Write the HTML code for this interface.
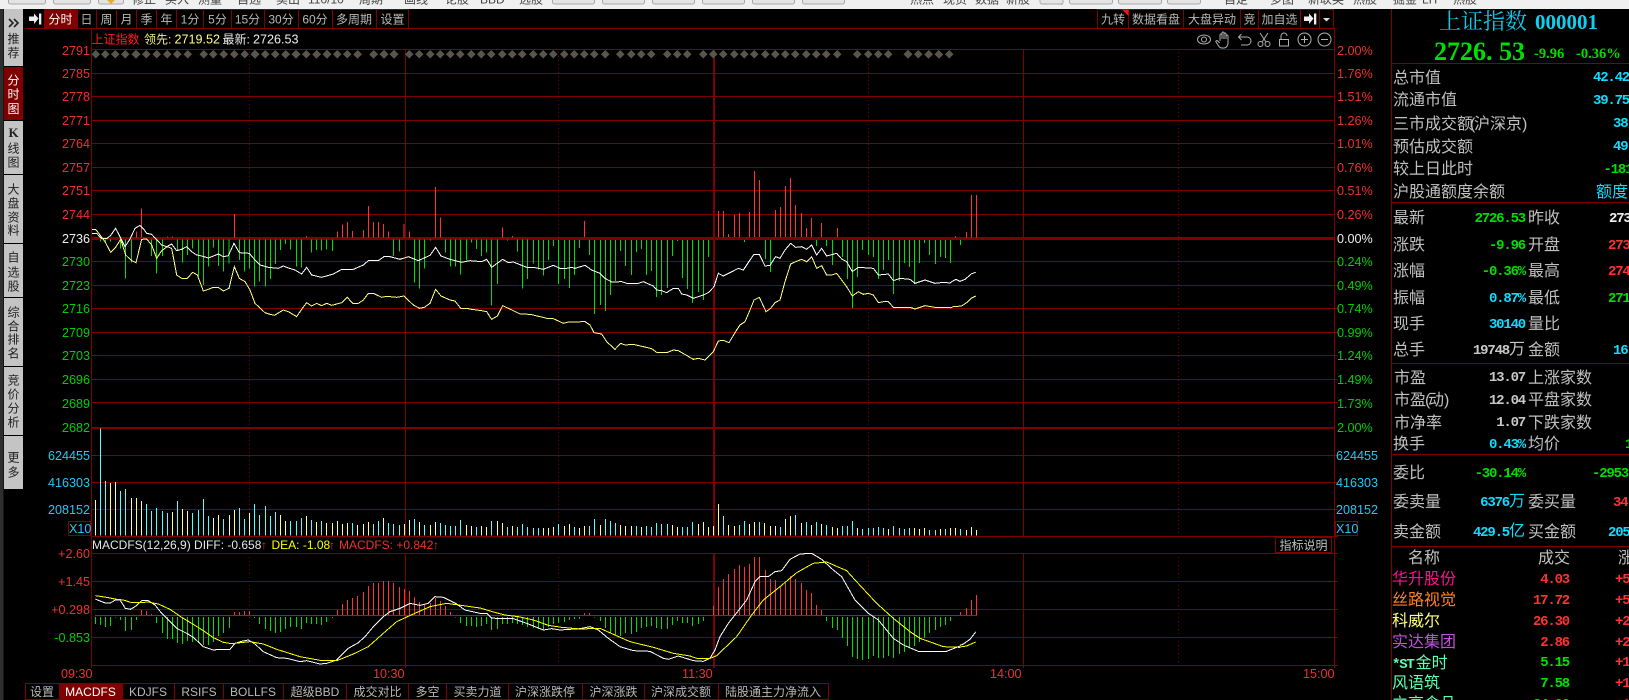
<!DOCTYPE html>
<html><head><meta charset="utf-8"><title>上证指数 分时图</title>
<style>
html,body{margin:0;padding:0;background:#000;width:1629px;height:700px;overflow:hidden}
svg{display:block;position:absolute;left:0;top:0}
text{font-family:"Liberation Sans","WenQuanYi Zen Hei","Noto Sans CJK SC",sans-serif;white-space:pre}
.a{font-size:12.6px}
.m{font-size:12px}
.r{fill:#f03030}.g{fill:#00d000}.c{fill:#22c8f5}.w{fill:#f0f0f0}.y{fill:#ffff60}.t{fill:#c0c0c0}
.ta{font-size:12px;fill:#b8b8b8;text-anchor:middle}
.sd{font-size:12px;fill:#222}
.l{font-size:16px;fill:#c0c0c0}
.n{font-family:"Liberation Mono",monospace;font-weight:bold;font-size:14px;letter-spacing:-1.2px}
.e{text-anchor:end}
.u{font-size:16px;font-family:"Liberation Sans","WenQuanYi Zen Hei","Noto Sans CJK SC",sans-serif;font-weight:normal;letter-spacing:0}
.top{font-size:12px;fill:#444}
</style></head><body>
<svg width="1629" height="700" viewBox="0 0 1629 700" xmlns="http://www.w3.org/2000/svg">
<rect width="1629" height="700" fill="#000"/>
<!-- top strip -->
<rect width="1629" height="9" fill="#f0f0f0"/>
<rect x="0" y="9" width="3.5" height="691" fill="#2e2e2e"/>
<g fill="#e4e4e4" stroke="#a8a8a8"><rect x="8.5" y="-6" width="37" height="10" rx="2"/><rect x="53.5" y="-6" width="37" height="10" rx="2"/><rect x="98.5" y="-6" width="25" height="10" rx="2"/></g>
<path d="M107 0h8l-4 4z" fill="#e8b020"/>
<g class="top">
<text class="top" x="132" y="3.5">修正</text><text class="top" x="165" y="3.5">买入</text><text class="top" x="198" y="3.5">测量</text><text class="top" x="237" y="3.5">自选</text><text class="top" x="276" y="3.5">卖出</text><text class="top" x="308" y="3.5">110/10</text><text class="top" x="359" y="3.5">周期</text><text class="top" x="404" y="3.5">画线</text><text class="top" x="445" y="3.5">论股</text><text class="top" x="480" y="3.5">BBD</text><text class="top" x="519" y="3.5">选股</text>
<text class="top" x="910" y="3.5">热点</text><text class="top" x="943" y="3.5">现货</text><text class="top" x="975" y="3.5">数据</text><text class="top" x="1006" y="3.5">新股</text><text class="top" x="1040" y="3.5">诊断</text><text class="top" x="1224" y="3.5">自定</text><text class="top" x="1270" y="3.5">多图</text><text class="top" x="1308" y="3.5">新联英</text><text class="top" x="1353" y="3.5">热股</text><text class="top" x="1393" y="3.5">掘金</text><text class="top" x="1422" y="3.5">LIT</text><text class="top" x="1453" y="3.5">热股</text>
</g>
<g fill="#e4e4e4" stroke="#a8a8a8"><rect x="552.5" y="-6" width="42" height="10" rx="2"/><rect x="602.5" y="-6" width="42" height="10" rx="2"/><rect x="652.5" y="-6" width="42" height="10" rx="2"/><rect x="702.5" y="-6" width="42" height="10" rx="2"/><rect x="752.5" y="-6" width="42" height="10" rx="2"/><rect x="802.5" y="-6" width="42" height="10" rx="2"/><rect x="1040" y="-6" width="23" height="10" rx="2"/><rect x="1069.5" y="-6" width="43" height="10" rx="2"/><rect x="1118.5" y="-6" width="43" height="10" rx="2"/><rect x="1167.5" y="-6" width="33" height="10" rx="2"/></g>

<!-- left sidebar -->
<g fill="#c4c4c4"><rect x="4" y="9" width="19" height="57"/><rect x="4" y="121" width="19" height="53"/><rect x="4" y="175" width="19" height="68"/><rect x="4" y="244" width="19" height="53"/><rect x="4" y="298" width="19" height="68"/><rect x="4" y="367" width="19" height="68"/><rect x="4" y="436" width="19" height="53"/></g>
<rect x="4" y="67" width="19" height="53" fill="#800000"/>
<path d="M9 19l4 4-4 4M14 19l4 4-4 4" fill="none" stroke="#222" stroke-width="1.6"/>
<text class="sd" x="7.5 7.5" y="42.8 56.8">推荐</text>
<text class="sd" style="fill:#fff" x="7.5 7.5 7.5" y="84.5 98.5 112.8">分时图</text>
<text style="font:bold 13px 'Liberation Serif',serif;fill:#222" x="8.5" y="137">K</text>
<text class="sd" x="7.5 7.5" y="152.5 166.5">线图</text>
<text class="sd" x="7.5 7.5 7.5 7.5" y="193.5 207.5 221.5 234.5">大盘资料</text>
<text class="sd" x="7.5 7.5 7.5" y="261.5 276.5 290.5">自选股</text>
<text class="sd" x="7.5 7.5 7.5 7.5" y="316.5 330.5 343.5 357.5">综合排名</text>
<text class="sd" x="7.5 7.5 7.5 7.5" y="384.5 398.5 412.5 426.5">竞价分析</text>
<text class="sd" x="7.5 7.5" y="461.5 476.5">更多</text>

<!-- grid -->
<path shape-rendering="crispEdges" stroke="#800000" fill="none" d="M25 28.5H1334M91 49.5H1334M91 73.5H1334M91 96.5H1334M91 120.5H1334M91 143.5H1334M91 167.5H1334M91 190.5H1334M91 214.5H1334M91 261.5H1338M91 285.5H1338M91 308.5H1338M91 332.5H1338M91 355.5H1338M91 379.5H1338M91 402.5H1338M91 455.5H1338M91 482.5H1338M91 509.5H1338M91 536.5H1338M91 553.5H1338M91 581.5H1338M91 609.5H1338M91 637.5H1338M91 665.5H1338M91.5 29V668M405.5 49V536M405.5 553V668M1023.5 49V536M1023.5 553V668M1334.5 28V668M1391.5 9V700M1391 63.5H1629M1391 202.5H1629M1391 363.5H1629M1391 454.5H1629M1391 546.5H1629"/>
<path shape-rendering="crispEdges" stroke="#800000" fill="none" stroke-dasharray="1 3" d="M249.5 52V536M249.5 553V665M558.5 52V536M558.5 553V665M868.5 52V536M868.5 553V665M1178.5 52V536M1178.5 553V665"/>
<g fill="#800000" shape-rendering="crispEdges"><rect x="91" y="237" width="1243" height="3"/><rect x="91" y="427" width="1243" height="2"/><rect x="713" y="49" width="2" height="487"/><rect x="713" y="553" width="2" height="115"/></g>
<path shape-rendering="crispEdges" stroke="#b81414" d="M95 615.5H977"/>

<!-- diamonds -->
<g fill="#555" shape-rendering="crispEdges" transform="scale(.33333)"><path d="M287 150l13 13-13 13-13-13zM316 150l13 13-13 13-13-13zM346 150l13 13-13 13-13-13zM376 150l13 13-13 13-13-13zM408 150l13 13-13 13-13-13zM439 150l13 13-13 13-13-13zM470 150l13 13-13 13-13-13zM502 150l13 13-13 13-13-13zM532 150l13 13-13 13-13-13zM563 150l13 13-13 13-13-13zM611 150l13 13-13 13-13-13zM640 150l13 13-13 13-13-13zM671 150l13 13-13 13-13-13zM703 150l13 13-13 13-13-13zM734 150l13 13-13 13-13-13zM765 150l13 13-13 13-13-13zM796 150l13 13-13 13-13-13zM826 150l13 13-13 13-13-13zM857 150l13 13-13 13-13-13zM888 150l13 13-13 13-13-13zM919 150l13 13-13 13-13-13zM950 150l13 13-13 13-13-13zM981 150l13 13-13 13-13-13zM1012 150l13 13-13 13-13-13zM1042 150l13 13-13 13-13-13zM1073 150l13 13-13 13-13-13zM1121 150l13 13-13 13-13-13zM1152 150l13 13-13 13-13-13zM1182 150l13 13-13 13-13-13z"/></g>
<g fill="#555" shape-rendering="crispEdges" transform="translate(400,46) scale(.33333)"><path d="M28 12l13 13-13 13-13-13zM58 12l13 13-13 13-13-13zM91 12l13 13-13 13-13-13zM121 12l13 13-13 13-13-13zM151 12l13 13-13 13-13-13zM181 12l13 13-13 13-13-13zM214 12l13 13-13 13-13-13zM244 12l13 13-13 13-13-13zM274 12l13 13-13 13-13-13zM307 12l13 13-13 13-13-13zM337 12l13 13-13 13-13-13zM367 12l13 13-13 13-13-13zM400 12l13 13-13 13-13-13zM430 12l13 13-13 13-13-13zM460 12l13 13-13 13-13-13zM493 12l13 13-13 13-13-13zM523 12l13 13-13 13-13-13zM553 12l13 13-13 13-13-13zM583 12l13 13-13 13-13-13zM616 12l13 13-13 13-13-13zM661 12l13 13-13 13-13-13zM694 12l13 13-13 13-13-13zM724 12l13 13-13 13-13-13zM754 12l13 13-13 13-13-13zM802 12l13 13-13 13-13-13zM832 12l13 13-13 13-13-13zM862 12l13 13-13 13-13-13zM910 12l13 13-13 13-13-13zM940 12l13 13-13 13-13-13zM970 12l13 13-13 13-13-13zM1003 12l13 13-13 13-13-13zM1033 12l13 13-13 13-13-13zM1063 12l13 13-13 13-13-13zM1096 12l13 13-13 13-13-13zM1126 12l13 13-13 13-13-13zM1156 12l13 13-13 13-13-13zM1186 12l13 13-13 13-13-13zM1219 12l13 13-13 13-13-13zM1249 12l13 13-13 13-13-13zM1279 12l13 13-13 13-13-13zM1312 12l13 13-13 13-13-13zM1372 12l13 13-13 13-13-13zM1405 12l13 13-13 13-13-13zM1435 12l13 13-13 13-13-13zM1465 12l13 13-13 13-13-13zM1524 12l13 13-13 13-13-13zM1555 12l13 13-13 13-13-13zM1586 12l13 13-13 13-13-13zM1617 12l13 13-13 13-13-13zM1648 12l13 13-13 13-13-13z"/></g>

<!-- main bars part 1 -->
<g transform="translate(80,190) scale(.33333)" fill="none" stroke-width="3" shape-rendering="crispEdges">
<path stroke="#ff3232" d="M170 143V125M185 143V55M262 143V140M277 143V140M463 143V72M680 143V138M772 143V125M787 143V103M802 143V96M817 143V123M850 143V120M865 143V48M880 143V96M895 143V96M910 143V102M925 143V125M972 143V102M988 143V125M1067 143V-9M1082 143V82M1267 143V113M1298 143V138"/>
<path stroke="#00e000" d="M62 149V155M77 149V155M92 149V155M122 149V175M137 149V265M155 149V218M215 149V198M230 149V250M247 149V198M292 149V182M307 149V218M322 149V195M337 149V175M355 149V260M370 149V285M385 149V230M400 149V172M415 149V228M430 149V245M447 149V220M478 149V210M493 149V245M508 149V235M523 149V290M538 149V275M556 149V290M571 149V267M586 149V222M601 149V180M616 149V162M631 149V178M649 149V230M664 149V232M694 149V188M709 149V180M724 149V182M739 149V178M757 149V183M940 149V198M958 149V185M1003 149V278M1018 149V296M1033 149V235M1052 149V151M1096 149V188M1111 149V230M1126 149V230M1141 149V254M1159 149V212M1174 149V158M1189 149V177M1204 149V198M1219 149V188M1235 149V347M1252 149V282M1282 149V151M1312 149V184M1328 149V296M1343 149V267"/>
</g>
<!-- main bars part 2 -->
<g transform="translate(530,160) scale(.33333)" fill="none" stroke-width="3" shape-rendering="crispEdges">
<path stroke="#ff3232" d="M163 231V183M566 231V153M581 231V153M596 231V222M613 231V165M628 231V159M658 231V156M673 231V33M688 231V60M736 231V150M751 231V141M766 231V78M781 231V54M796 231V135M814 231V159M829 231V204M844 231V174M874 231V189M922 231V204"/>
<path stroke="#00e000" d="M10 240V310M25 240V328M40 240V347M55 240V300M70 240V258M85 240V372M103 240V357M118 240V384M133 240V345M148 240V264M178 240V285M193 240V462M211 240V435M226 240V453M241 240V405M256 240V363M271 240V273M286 240V318M304 240V345M319 240V276M334 240V267M349 240V345M364 240V333M379 240V411M394 240V405M412 240V384M427 240V288M442 240V243M457 240V354M472 240V387M487 240V429M505 240V396M520 240V420M535 240V291M643 240V246M706 240V297M721 240V336M859 240V258M889 240V258M907 240V315M937 240V291M952 240V357M967 240V444M982 240V351M997 240V270M1015 240V285M1030 240V291M1045 240V357M1060 240V330M1075 240V300M1090 240V402M1108 240V363M1123 240V309M1138 240V321M1153 240V372M1168 240V309M1183 240V249M1198 240V285M1216 240V312M1231 240V291M1246 240V294"/>
</g>
<g transform="translate(930,180) scale(.33333)" fill="none" stroke-width="3" shape-rendering="crispEdges">
<path stroke="#ff3232" d="M76 172V168M109 172V156M124 172V45M139 172V45"/>
<path stroke="#00e000" d="M61 180V249M91 180V195"/>
</g>
<!-- main lines -->
<g fill="none" stroke-width="3" shape-rendering="crispEdges">
<g transform="translate(80,190) scale(.33333)">
<polyline stroke="#ffffff" points="36,130 50,130 65,146 80,146 92,136 107,115 120,140 135,170 150,147 165,115 180,106 192,118 200,130 215,133 228,147 245,165 260,170 275,162 290,182 305,178 320,170 335,185 350,195 365,198 385,204 400,198 415,192 430,200 445,197 462,160 478,188 508,190 525,210 540,225 565,232 595,235 610,228 625,234 645,240 665,252 680,232 695,255 725,262 760,252 785,238 820,238 850,225 865,212 895,212 912,200 930,200 960,208 985,200 1015,212 1050,196 1067,172 1083,198 1110,208 1145,217 1170,212 1205,215 1220,208 1235,232 1268,208 1285,218 1300,216 1320,224 1340,232 1350,232"/>
<polyline stroke="#ffff80" points="36,118 47,118 60,135 75,155 92,187 107,172 122,148 137,195 155,212 168,218 185,148 200,147 215,165 230,205 245,182 262,170 275,175 290,255 305,265 322,265 338,247 352,255 370,303 385,298 400,292 415,292 430,303 447,295 463,230 478,265 495,275 510,300 525,340 555,368 570,373 583,376 610,360 625,365 650,380 665,358 680,338 695,348 710,340 725,347 740,340 755,346 785,338 802,322 818,340 835,340 850,330 865,310 880,310 905,322 920,319 950,322 972,318 1000,345 1018,355 1033,352 1050,340 1067,298 1083,318 1110,330 1125,333 1142,355 1160,355 1175,358 1205,362 1220,365 1235,388 1252,378 1268,347 1285,355 1300,362 1320,372 1350,373"/>
</g>
<g transform="translate(530,160) scale(.33333)">
<polyline stroke="#ffffff" points="0,322 15,323 40,328 70,316 90,325 110,325 125,322 135,325 165,316 185,330 210,340 225,355 245,366 275,365 290,370 325,370 340,365 370,378 380,390 395,392 410,398 430,385 445,385 455,402 470,405 490,415 520,405 535,398 552,380 565,340 580,348 600,338 625,325 640,330 660,300 672,283 688,283 705,318 720,316 737,290 750,295 765,270 782,250 797,262 815,260 830,268 845,255 860,285 875,265 890,288 920,280 935,297 950,305 967,335 985,322 1030,325 1045,345 1075,342 1090,362 1110,355 1140,358 1155,370 1185,360 1215,370 1240,367 1260,369"/>
<polyline stroke="#ffff80" points="0,463 30,470 50,475 70,476 100,490 115,486 165,485 180,495 192,518 215,522 230,545 255,568 272,550 285,555 310,553 340,560 365,566 380,577 410,578 430,570 445,572 490,598 505,595 525,600 550,575 565,543 580,541 597,548 620,510 630,495 645,485 660,450 672,420 688,412 708,455 722,445 735,428 750,420 765,365 782,312 797,305 815,298 830,305 845,290 860,325 875,317 890,345 905,345 920,340 950,380 967,408 985,395 1000,403 1015,400 1030,405 1045,428 1060,425 1075,425 1090,442 1140,442 1155,447 1185,437 1215,442 1260,442"/>
</g>
<g transform="translate(930,180) scale(.33333)">
<polyline stroke="#ffffff" points="60,309 70,302 78,298 90,304 105,298 125,281 137,277"/>
<polyline stroke="#ffff80" points="60,384 70,380 95,378 110,368 125,354 137,348"/>
</g>
</g>

<!-- volume -->
<g transform="translate(0,400) scale(.33333)" fill="none" stroke-width="3" shape-rendering="crispEdges">
<path stroke="#ffff90" d="M286 407V300M331 407V249M346 407V246M394 407V294M409 407V294M424 407V303M517 407V336M547 407V327M562 407V333M640 407V354M655 407V345M688 407V345M703 407V330M748 407V339M841 407V345M856 407V363M919 407V348M949 407V366M979 407V369M997 407V369M1012 407V363M1027 407V372M1042 407V369M1072 407V375M1090 407V372M1105 407V366M1150 407V354M1213 407V372M1228 407V360M1258 407V366M1291 407V375M1306 407V366M1399 407V375M1414 407V378"/>
<path stroke="#55ffff" d="M301 407V85M316 407V243M361 407V273M376 407V267M439 407V312M454 407V333M469 407V324M487 407V333M502 407V339M532 407V303M577 407V339M595 407V330M610 407V297M625 407V348M670 407V357M718 407V324M733 407V357M763 407V312M778 407V345M796 407V318M811 407V348M826 407V336M871 407V363M889 407V363M904 407V354M934 407V360M964 407V363M1057 407V369M1120 407V372M1135 407V363M1165 407V369M1180 407V372M1198 407V375M1243 407V357M1273 407V375M1321 407V369M1336 407V375M1351 407V378M1366 407V378M1381 407V360M1429 407V381"/>
</g>
<g transform="translate(480,400) scale(.33333)" fill="none" stroke-width="3" shape-rendering="crispEdges">
<path stroke="#ffff90" d="M4 407V378M19 407V381M52 407V363M67 407V369M97 407V378M190 407V384M205 407V384M220 407V381M253 407V378M268 407V372M298 407V384M313 407V378M361 407V375M421 407V375M436 407V378M454 407V378M484 407V381M577 407V375M592 407V381M655 407V372M670 407V366M685 407V381M700 407V378M715 407V312M745 407V375M763 407V378M808 407V372M823 407V366M853 407V369M871 407V378M886 407V378M916 407V357M931 407V348M964 407V369M994 407V375M1024 407V372M1057 407V381M1072 407V384M1132 407V384M1225 407V387M1303 407V384M1318 407V387M1333 407V384M1381 407V387M1411 407V384M1426 407V384"/>
<path stroke="#55ffff" d="M34 407V363M82 407V381M112 407V381M127 407V372M142 407V381M160 407V384M175 407V384M235 407V372M283 407V381M328 407V378M343 407V357M376 407V357M391 407V363M406 407V369M469 407V378M499 407V378M514 407V381M529 407V369M544 407V372M562 407V372M607 407V381M622 407V381M637 407V366M730 407V348M778 407V375M793 407V363M838 407V366M901 407V381M946 407V345M979 407V366M1009 407V366M1039 407V375M1087 407V378M1102 407V378M1117 407V363M1147 407V387M1165 407V384M1180 407V384M1195 407V381M1210 407V384M1240 407V378M1258 407V384M1273 407V387M1288 407V384M1348 407V390M1366 407V390M1396 407V387"/>
</g>
<g transform="translate(930,180) scale(.33333)" fill="none" stroke-width="3" shape-rendering="crispEdges">
<path stroke="#55ffff" d="M91 1067V1047"/>
<path stroke="#ffff90" d="M109 1067V1050M124 1067V1041M139 1067V1050"/>
</g>

<!-- MACD histogram -->
<g transform="translate(0,400) scale(.33333)" fill="none" stroke-width="3" shape-rendering="crispEdges">
<path stroke="#ff3232" d="M424 645V630M439 645V633M454 645V642M703 645V636M718 645V636M733 645V633M748 645V633M1012 645V630M1027 645V612M1042 645V600M1057 645V594M1072 645V588M1090 645V576M1105 645V558M1120 645V549M1135 645V549M1150 645V543M1165 645V543M1180 645V549M1198 645V561M1213 645V567M1228 645V573M1243 645V591M1258 645V606M1273 645V612M1291 645V609M1306 645V594M1321 645V603M1336 645V618M1351 645V636"/>
<path stroke="#00e000" d="M286 651V672M301 651V675M316 651V681M331 651V678M346 651V653M361 651V660M376 651V693M394 651V690M409 651V660M469 651V669M487 651V699M502 651V717M517 651V717M532 651V729M547 651V732M562 651V723M577 651V726M595 651V729M610 651V735M625 651V735M640 651V726M655 651V708M670 651V699M688 651V684M763 651V654M778 651V672M796 651V687M811 651V693M826 651V699M841 651V696M856 651V687M871 651V681M889 651V681M904 651V687M919 651V669M934 651V672M949 651V672M964 651V675M979 651V666M997 651V654M1366 651V653M1381 651V669M1399 651V678M1414 651V678M1429 651V681"/>
</g>
<g transform="translate(480,400) scale(.33333)" fill="none" stroke-width="3" shape-rendering="crispEdges">
<path stroke="#ff3232" d="M313 645V639M328 645V639M700 645V618M715 645V561M730 645V537M745 645V522M763 645V507M778 645V495M793 645V501M808 645V492M823 645V471M838 645V471M856 645V510M871 645V537M886 645V540M901 645V558M916 645V549M931 645V528M946 645V537M964 645V549M979 645V570M994 645V579M1009 645V615M1024 645V630"/>
<path stroke="#00e000" d="M4 651V678M19 651V672M34 651V690M52 651V687M67 651V672M82 651V672M97 651V669M112 651V672M127 651V675M142 651V681M160 651V684M175 651V687M190 651V690M205 651V681M220 651V672M235 651V669M253 651V666M268 651V660M283 651V657M298 651V657M343 651V652M361 651V663M376 651V684M391 651V699M406 651V705M421 651V708M436 651V699M454 651V702M469 651V696M484 651V684M499 651V681M514 651V678M529 651V684M544 651V687M562 651V687M577 651V675M592 651V663M607 651V669M622 651V669M637 651V678M655 651V672M670 651V663M1039 651V663M1057 651V684M1072 651V690M1087 651V714M1102 651V738M1117 651V771M1132 651V777M1147 651V780M1165 651V777M1180 651V768M1195 651V774M1210 651V774M1225 651V768M1240 651V774M1258 651V762M1273 651V756M1288 651V741M1303 651V738M1318 651V726M1333 651V714M1348 651V699M1366 651V690M1381 651V681M1396 651V675M1411 651V663"/>
</g>
<g transform="translate(930,180) scale(.33333)" fill="none" stroke-width="3" shape-rendering="crispEdges">
<path stroke="#ff3232" d="M91 1305V1296M109 1305V1284M124 1305V1260M139 1305V1245"/>
</g>
<!-- MACD lines -->
<g fill="none" stroke-width="3" shape-rendering="crispEdges">
<g transform="translate(0,400) scale(.33333)">
<polyline stroke="#ffffff" points="286,597 300,603 316,609 331,609 346,600 360,600 376,625 392,628 408,618 425,602 445,602 465,615 485,640 505,660 530,685 560,700 580,712 610,740 640,750 660,748 690,748 705,730 725,724 745,720 765,732 790,755 830,773 860,775 900,785 920,782 960,792 980,790 1010,780 1045,745 1075,728 1095,710 1120,680 1150,650 1170,635 1200,625 1230,610 1260,616 1285,610 1305,590 1330,592 1370,612 1395,630 1440,640"/>
<polyline stroke="#ffff00" points="286,587 320,592 350,598 370,600 395,608 420,608 445,606 475,612 510,628 545,652 575,670 610,692 640,713 670,727 695,731 750,725 790,732 830,748 900,770 960,781 1010,782 1060,762 1105,740 1150,700 1190,665 1240,642 1290,620 1340,610 1440,624"/>
</g>
<g transform="translate(480,400) scale(.33333)">
<polyline stroke="#ffffff" points="0,640 20,640 35,654 60,656 100,656 140,670 190,690 215,686 240,690 270,688 300,686 330,680 355,690 385,715 420,740 460,752 510,754 550,775 565,778 595,768 640,782 670,784 690,775 705,750 720,710 745,670 765,645 800,600 825,545 840,530 865,530 885,515 905,512 930,478 960,462 995,460 1025,478 1060,510 1085,530 1125,600 1165,640 1195,660 1240,715 1270,735 1315,754 1400,754 1440,738"/>
<polyline stroke="#ffff00" points="0,624 40,636 75,645 115,650 160,660 205,676 245,682 300,687 360,685 400,703 450,725 520,742 580,760 630,768 650,775 690,775 710,767 770,710 815,645 850,600 900,560 950,518 1000,490 1040,486 1100,512 1125,540 1190,610 1240,655 1290,695 1320,715 1390,740 1440,742"/>
</g>
<g transform="translate(930,180) scale(.33333)">
<polyline stroke="#ffffff" points="90,1396 100,1392 120,1378 137,1356"/>
<polyline stroke="#ffff00" points="90,1401 110,1398 137,1386"/>
</g>
</g>

<!-- toolbar -->
<rect x="44" y="9" width="33" height="19" fill="#800000"/>
<path shape-rendering="crispEdges" stroke="#800000" fill="none" d="M44 9.5H408M77.5 9V28M96.5 9V28M116.5 9V28M136.5 9V28M156.5 9V28M176.5 9V28M203.5 9V28M231.5 9V28M264.5 9V28M298.5 9V28M332.5 9V28M376.5 9V28M408.5 9V28M1097 9.5H1334M1097.5 9V28M1128.5 9V28M1183.5 9V28M1240.5 9V28M1258.5 9V28M1300.5 9V28M1319.5 9V28M1333.5 9V28"/>
<path d="M29 16.5h5V13.5l4.5 5-4.5 5.5v-3h-5zM39 13.5h2.3v11H39z" fill="#eee"/>
<path d="M1304 16.5h5V13.5l4.5 5-4.5 5.5v-3h-5zM1314 13.5h2.3v11H1314z" fill="#eee"/>
<path d="M1323 18h7l-3.5 3.5z" fill="#ddd"/>
<path d="M1122 9.5h6.5v6.5z" fill="#ff1010"/>
<text class="ta" x="60.5" y="23.5" style="fill:#fff">分时</text>
<text class="ta" x="86.5" y="23.5">日</text><text class="ta" x="106.5" y="23.5">周</text><text class="ta" x="126.5" y="23.5">月</text><text class="ta" x="146.5" y="23.5">季</text><text class="ta" x="166.5" y="23.5">年</text><text class="ta" x="190" y="23.5">1分</text><text class="ta" x="217.5" y="23.5">5分</text><text class="ta" x="247.5" y="23.5">15分</text><text class="ta" x="281" y="23.5">30分</text><text class="ta" x="315" y="23.5">60分</text><text class="ta" x="354" y="23.5">多周期</text><text class="ta" x="392.5" y="23.5">设置</text>
<text class="ta" x="1113" y="23.5">九转</text><text class="ta" x="1156" y="23.5">数据看盘</text><text class="ta" x="1212" y="23.5">大盘异动</text><text class="ta" x="1249.5" y="23.5">竞</text><text class="ta" x="1279.5" y="23.5">加自选</text>

<!-- info line -->
<text x="91.5" y="43.5" style="font-size:12px" fill="#ff2020">上证指数</text>
<text x="144" y="43.5" style="font-size:12px" fill="#f0f080">领先:</text>
<text x="174.5" y="43.5" class="a" fill="#ffff80">2719.52</text>
<text x="222.5" y="43.5" style="font-size:12px" fill="#eee">最新:</text>
<text x="253" y="43.5" class="a" fill="#eee">2726.53</text>

<!-- tool icons -->
<g fill="none" stroke="#b0b0b0" stroke-width="1">
<ellipse cx="1204" cy="39.5" rx="6.5" ry="4.5"/><circle cx="1204" cy="39.5" r="2.5"/>
<path d="M1220 41v-6a1 1 0 0 1 2 0v4-6a1 1 0 0 1 2 0v6-5a1 1 0 0 1 2 0v5-3a1 1 0 0 1 2 0v7c0 3-2 5-4 5h-2c-2 0-3-1-4-3l-2-3c-.6-1 .7-2 1.7-1l2 2"/>
<path d="M1239 37h8a4 4 0 0 1 0 8h-6M1241.5 34l-3 3 3 3"/>
<circle cx="1260.5" cy="44" r="2.5"/><circle cx="1267.5" cy="44" r="2.5"/><path d="M1262 42l6-9M1266 42l-6-9"/>
<rect x="1279.5" y="39.5" width="9" height="6.5"/><path d="M1281 39v-3a3 3 0 0 1 6 0"/>
<circle cx="1304.5" cy="39.5" r="6.5"/><path d="M1301 39.5h7M1304.5 36v7"/>
<circle cx="1324.5" cy="39.5" r="6.5"/><path d="M1321 39.5h7"/>
</g>

<!-- left axis -->
<g class="a e">
<text class="a e r" x="90" y="55">2791</text><text class="a e r" x="90" y="78">2785</text><text class="a e r" x="90" y="101">2778</text><text class="a e r" x="90" y="125">2771</text><text class="a e r" x="90" y="148">2764</text><text class="a e r" x="90" y="172">2757</text><text class="a e r" x="90" y="195">2751</text><text class="a e r" x="90" y="219">2744</text>
<text class="a e w" x="90" y="243">2736</text>
<text class="a e g" x="90" y="266">2730</text><text class="a e g" x="90" y="290">2723</text><text class="a e g" x="90" y="313">2716</text><text class="a e g" x="90" y="337">2709</text><text class="a e g" x="90" y="360">2703</text><text class="a e g" x="90" y="384">2696</text><text class="a e g" x="90" y="408">2689</text><text class="a e g" x="90" y="432">2682</text>
<text class="a e c" x="90" y="460">624455</text><text class="a e c" x="90" y="487">416303</text><text class="a e c" x="90" y="514">208152</text>
<text class="a e r" x="90" y="558">+2.60</text><text class="a e r" x="90" y="586">+1.45</text><text class="a e r" x="90" y="614">+0.298</text><text class="a e g" x="90" y="642">-0.853</text>
</g>
<rect x="68.5" y="521.5" width="22" height="14" fill="none" stroke="#800000"/>
<text class="a c" x="69" y="533">X10</text>

<!-- right axis -->
<g>
<text class="a r" x="1337" y="55">2.00%</text><text class="a r" x="1337" y="78">1.76%</text><text class="a r" x="1337" y="101">1.51%</text><text class="a r" x="1337" y="125">1.26%</text><text class="a r" x="1337" y="148">1.01%</text><text class="a r" x="1337" y="172">0.76%</text><text class="a r" x="1337" y="195">0.51%</text><text class="a r" x="1337" y="219">0.26%</text>
<text class="a w" x="1337" y="243">0.00%</text>
<text class="a g" x="1337" y="266">0.24%</text><text class="a g" x="1337" y="290">0.49%</text><text class="a g" x="1337" y="313">0.74%</text><text class="a g" x="1337" y="337">0.99%</text><text class="a g" x="1337" y="360">1.24%</text><text class="a g" x="1337" y="384">1.49%</text><text class="a g" x="1337" y="408">1.73%</text><text class="a g" x="1337" y="432">2.00%</text>
<text class="a c" x="1336" y="460">624455</text><text class="a c" x="1336" y="487">416303</text><text class="a c" x="1336" y="514">208152</text>
</g>
<rect x="1335.5" y="521.5" width="22" height="14" fill="none" stroke="#800000"/>
<text class="a c" x="1336" y="533">X10</text>

<!-- MACD title -->
<text class="m" x="92" y="549" fill="#e8e8e8">MACDFS(12,26,9) DIFF: -0.658</text>
<text class="m r" x="264" y="549" text-anchor="middle">↑</text>
<text class="m" x="271.5" y="549" fill="#ffff00">DEA: -1.08</text>
<text class="m r" x="332" y="549" text-anchor="middle">↑</text>
<text class="m r" x="339" y="549">MACDFS: +0.842</text>
<text class="m r" x="436" y="549" text-anchor="middle">↑</text>
<rect x="1275.5" y="537.5" width="56" height="15" fill="#000" stroke="#800000"/>
<text x="1303.5" y="549.5" text-anchor="middle" style="font-size:12px" fill="#c0c0c0">指标说明</text>

<!-- time axis -->
<text class="a r" x="61" y="678">09:30</text><text class="a r" x="373" y="678">10:30</text><text class="a r" x="682" y="678">11:30</text><text class="a r" x="990" y="678">14:00</text><text class="a r" x="1303" y="678">15:00</text>

<!-- bottom tabs -->
<rect x="59" y="683" width="64" height="17" fill="#800000"/>
<path shape-rendering="crispEdges" stroke="#800000" fill="none" d="M25 683.5H828M25 699.5H828M25.5 683V700M59.5 683V700M122.5 683V700M174.5 683V700M223.5 683V700M283.5 683V700M346.5 683V700M408.5 683V700M446.5 683V700M508.5 683V700M582.5 683V700M644.5 683V700M718.5 683V700M828.5 683V700"/>
<g>
<text class="ta" x="42" y="696">设置</text><text class="ta" x="90.5" y="696" style="fill:#fff">MACDFS</text><text class="ta" x="148" y="696">KDJFS</text><text class="ta" x="199" y="696">RSIFS</text><text class="ta" x="253" y="696">BOLLFS</text><text class="ta" x="315" y="696">超级BBD</text><text class="ta" x="377.5" y="696">成交对比</text><text class="ta" x="427.5" y="696">多空</text><text class="ta" x="477.5" y="696">买卖力道</text><text class="ta" x="545" y="696">沪深涨跌停</text><text class="ta" x="613.5" y="696">沪深涨跌</text><text class="ta" x="681" y="696">沪深成交额</text><text class="ta" x="773" y="696">陆股通主力净流入</text>
</g>

<!-- right panel header -->
<text x="1439" y="29" style="font:22px 'Noto Serif CJK SC',serif" fill="#10c8ee">上证指数</text>
<text x="1535" y="29" style="font:bold 21px 'Liberation Serif',serif" fill="#10d0f0">000001</text>
<text x="1434" y="60" style="font:bold 26px 'Liberation Serif',serif" fill="#00e000">2726. 53</text>
<text x="1534" y="58" style="font:bold 14.5px 'Liberation Serif',serif" fill="#00e000">-9.96</text>
<text x="1576" y="58" style="font:bold 14.5px 'Liberation Serif',serif" fill="#00e000">-0.36%</text>

<!-- section 1 -->
<text class="l" x="1393" y="83">总市值</text><text class="n" x="1593" y="81" fill="#10dcff">42.42<tspan class="u">万</tspan></text>
<text class="l" x="1393" y="105">流通市值</text><text class="n" x="1593" y="104" fill="#10dcff">39.75<tspan class="u">万</tspan></text>
<text class="l" x="1393" y="129">三市成交额<tspan x="1470">(</tspan><tspan x="1474">沪深京</tspan><tspan x="1522">)</tspan></text><text class="n" x="1613" y="127" fill="#10dcff">38</text>
<text class="l" x="1393" y="152">预估成交额</text><text class="n" x="1613" y="150" fill="#10dcff">49</text>
<text class="l" x="1393" y="174">较上日此时</text><text class="n" x="1603.5" y="173" fill="#00e000">-181</text>
<text class="l" x="1393" y="197">沪股通额度余额</text><text x="1596" y="197" style="font-size:16px" fill="#10dcff">额度</text>

<!-- section 2 -->
<text class="l" x="1393" y="223">最新</text><text class="n e" x="1525" y="222" fill="#00e000">2726.53</text><text class="l" x="1528" y="223">昨收</text><text class="n" x="1609" y="222" fill="#f0f0f0">273</text>
<text class="l" x="1393" y="250">涨跌</text><text class="n e" x="1525" y="249" fill="#00e000">-9.96</text><text class="l" x="1528" y="250">开盘</text><text class="n" x="1608" y="249" fill="#ff3232">273</text>
<text class="l" x="1393" y="276">涨幅</text><text class="n e" x="1525" y="275" fill="#00e000">-0.36%</text><text class="l" x="1528" y="276">最高</text><text class="n" x="1608" y="275" fill="#ff3232">274</text>
<text class="l" x="1393" y="303">振幅</text><text class="n e" x="1525" y="302" fill="#10dcff">0.87%</text><text class="l" x="1528" y="303">最低</text><text class="n" x="1608" y="302" fill="#00e000">271</text>
<text class="l" x="1393" y="329">现手</text><text class="n e" x="1525" y="328" fill="#10dcff">30140</text><text class="l" x="1528" y="329">量比</text>
<text class="l" x="1393" y="355">总手</text><text class="n e" x="1525" y="354" fill="#c8c8c8">19748<tspan class="u">万</tspan></text><text class="l" x="1528" y="355">金额</text><text class="n" x="1613" y="354" fill="#10dcff">16</text>

<!-- section 3 -->
<text class="l" x="1394" y="383">市盈</text><text class="n e" x="1525" y="381" fill="#c8c8c8">13.07</text><text class="l" x="1528" y="383">上涨家数</text>
<text class="l" x="1394" y="405">市盈<tspan x="1425">(</tspan><tspan x="1428">动</tspan><tspan x="1444">)</tspan></text><text class="n e" x="1525" y="404" fill="#c8c8c8">12.04</text><text class="l" x="1528" y="405">平盘家数</text>
<text class="l" x="1394" y="428">市净率</text><text class="n e" x="1525" y="426" fill="#c8c8c8">1.07</text><text class="l" x="1528" y="428">下跌家数</text>
<text class="l" x="1393" y="449">换手</text><text class="n e" x="1525" y="448" fill="#10dcff">0.43%</text><text class="l" x="1528" y="449">均价</text><text class="n" x="1625" y="448" fill="#00e000">1</text>

<!-- section 4 -->
<text class="l" x="1393" y="478">委比</text><text class="n e" x="1525" y="477" fill="#00e000">-30.14%</text><text class="n" x="1592" y="477" fill="#00e000">-2953</text>
<text class="l" x="1393" y="507">委卖量</text><text class="n e" x="1525" y="506" fill="#10dcff">6376<tspan class="u">万</tspan></text><text class="l" x="1528" y="507">委买量</text><text class="n" x="1613" y="506" fill="#ff3232">34</text>
<text class="l" x="1393" y="537">卖金额</text><text class="n e" x="1525" y="536" fill="#10dcff">429.5<tspan class="u">亿</tspan></text><text class="l" x="1528" y="537">买金额</text><text class="n" x="1608" y="536" fill="#10dcff">205</text>

<!-- table -->
<text class="l" x="1408" y="563">名称</text><text class="l" x="1538" y="563">成交</text><text class="l" x="1618" y="563">涨</text>
<text x="1392" y="584" style="font-size:16px" fill="#ff1090">华升股份</text><text class="n e" x="1569" y="583" fill="#ff3232">4.03</text><text class="n" x="1615" y="583" fill="#ff3232">+5</text>
<text x="1392" y="605" style="font-size:16px" fill="#ff8020">丝路视觉</text><text class="n e" x="1569" y="604" fill="#ff3232">17.72</text><text class="n" x="1615" y="604" fill="#ff3232">+5</text>
<text x="1392" y="626" style="font-size:16px" fill="#ffff80">科威尔</text><text class="n e" x="1569" y="625" fill="#ff3232">26.30</text><text class="n" x="1615" y="625" fill="#ff3232">+2</text>
<text x="1392" y="647" style="font-size:16px" fill="#c050e0">实达集团</text><text class="n e" x="1569" y="646" fill="#ff3232">2.86</text><text class="n" x="1615" y="646" fill="#ff3232">+2</text>
<text x="1392" y="668" fill="#60ffb0"><tspan class="n">*ST</tspan><tspan style="font-size:16px" dx="2">金时</tspan></text><text class="n e" x="1569" y="666" fill="#00e000">5.15</text><text class="n" x="1615" y="666" fill="#ff3232">+1</text>
<text x="1392" y="688" style="font-size:16px" fill="#60ffb0">风语筑</text><text class="n e" x="1569" y="687" fill="#00e000">7.58</text><text class="n" x="1615" y="687" fill="#ff3232">+1</text>
<text x="1392" y="709" style="font-size:16px" fill="#60ffb0">立高食品</text><text class="n e" x="1569" y="708" fill="#00e000">34.00</text><text class="n" x="1615" y="708" fill="#ff3232">+1</text>
</svg>
</body></html>
